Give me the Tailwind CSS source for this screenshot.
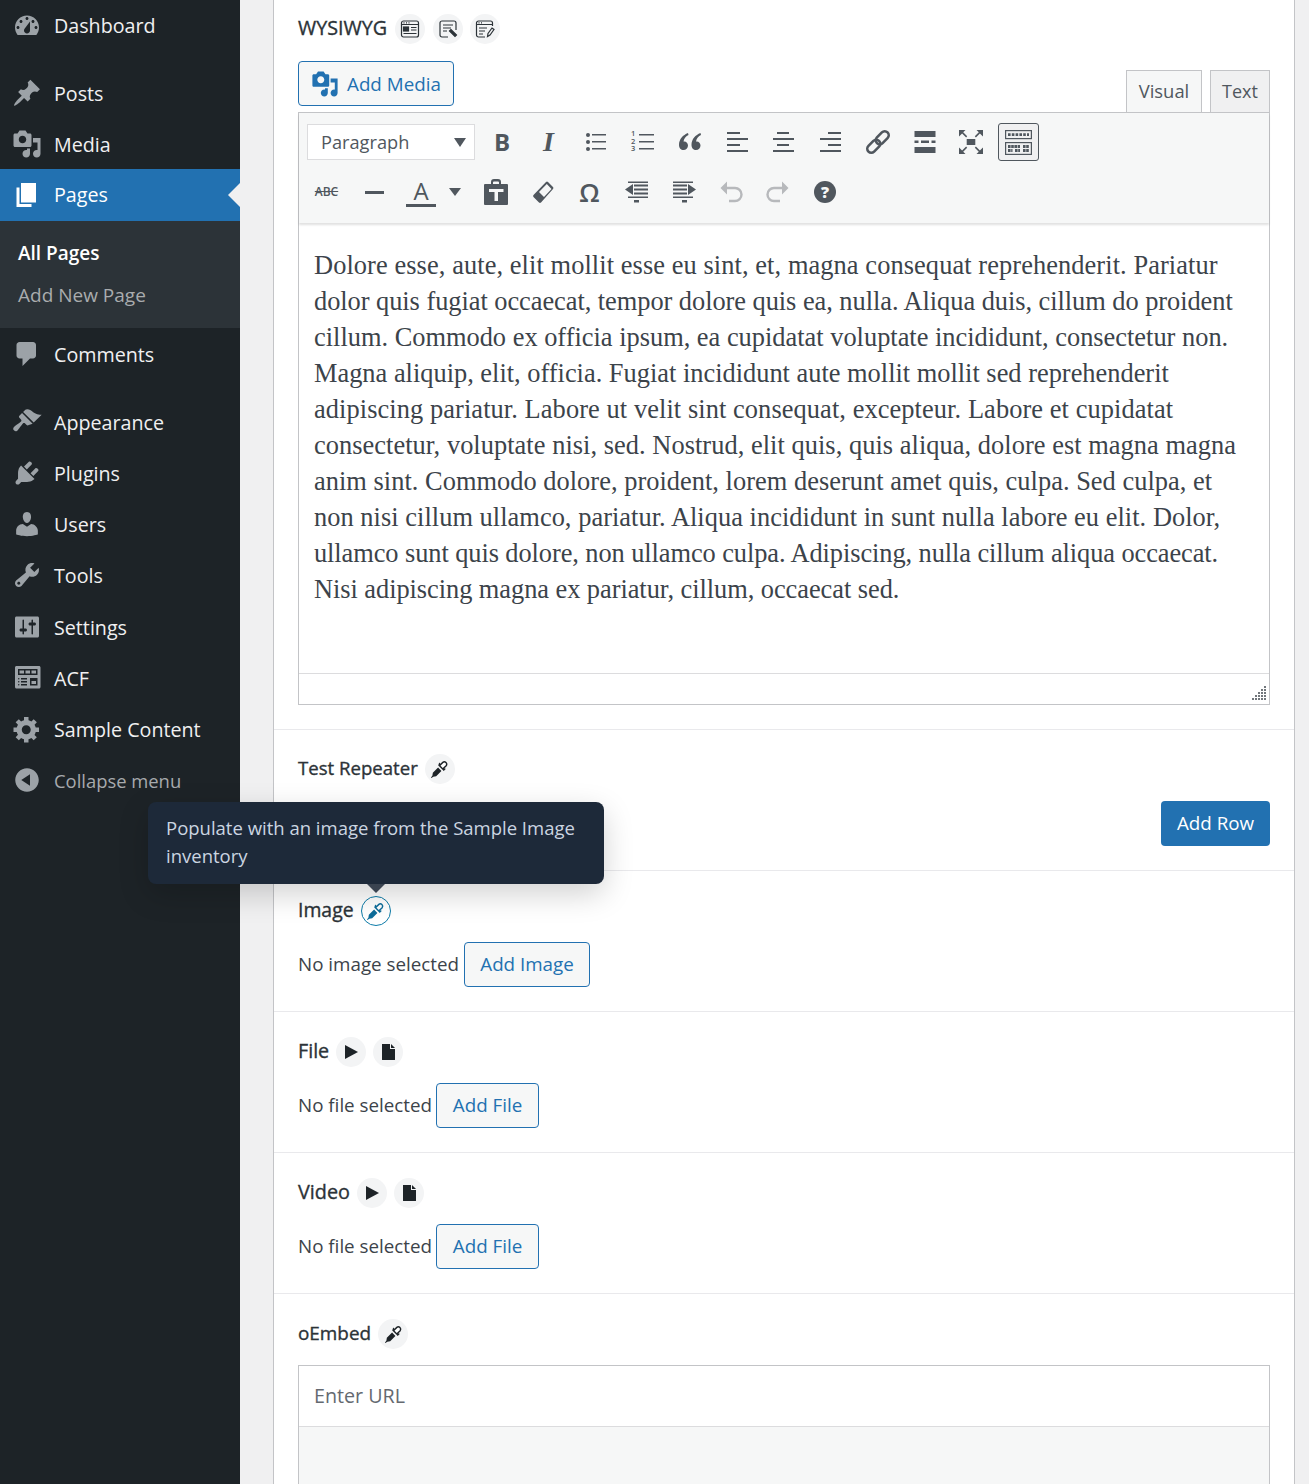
<!DOCTYPE html>
<html lang="en">
<head>
<meta charset="UTF-8">
<title>Edit Page</title>
<script src="https://cdn.jsdelivr.net/npm/@tailwindcss/browser@4"></script>
</head>
<body class="bg-[#f0f0f1] font-['Open_Sans',sans-serif] text-[18.8px] text-[#3c434a]">
<div class="flex h-[1484px] overflow-hidden">

  <!-- Admin menu -->
  <nav class="w-[240px] shrink-0 bg-[#1d2327] text-[19.7px] text-[#f0f0f1]">
    <a class="flex h-[51.3px] items-center"><svg class="ml-[12px] w-[30px] h-[30px] fill-[#9ca2a7]" viewBox="0 0 20 20"><path fill-rule="evenodd" d="M3.76 16h12.48c1.1-1.37 1.76-3.11 1.76-5 0-4.42-3.58-8-8-8s-8 3.58-8 8c0 1.89.66 3.63 1.76 5zM10 4c.55 0 1 .45 1 1s-.45 1-1 1-1-.45-1-1 .45-1 1-1zM6 6c.55 0 1 .45 1 1s-.45 1-1 1-1-.45-1-1 .45-1 1-1zm8 0c.55 0 1 .45 1 1s-.45 1-1 1-1-.45-1-1 .45-1 1-1zm-5.37 5.55L12 7v6c0 1.1-.9 2-2 2s-2-.9-2-2c0-.57.24-1.08.63-1.45zM4 10c.55 0 1 .45 1 1s-.45 1-1 1-1-.45-1-1 .45-1 1-1zm12 0c.55 0 1 .45 1 1s-.45 1-1 1-1-.45-1-1 .45-1 1-1z"/></svg><span class="ml-[12px]">Dashboard</span></a>
    <div class="h-[16px]"></div>
    <a class="flex h-[51.3px] items-center"><svg class="ml-[12px] w-[30px] h-[30px] fill-[#9ca2a7]" viewBox="0 0 20 20"><path d="M10.44 3.02l1.82-1.82 6.36 6.35-1.83 1.82c-1.05-.68-2.48-.57-3.41.36l-.75.75c-.92.93-1.04 2.35-.35 3.41l-1.83 1.82-2.41-2.41-2.8 2.79c-.42.42-3.38 2.71-3.8 2.29s1.86-3.39 2.28-3.81l2.79-2.79L4.1 9.36l1.83-1.82c1.05.69 2.48.57 3.4-.36l.75-.75c.93-.92 1.05-2.35.36-3.41z"/></svg><span class="ml-[12px] pt-[2px]">Posts</span></a>
    <a class="flex h-[51.3px] items-center"><svg class="ml-[12px] w-[30px] h-[30px] fill-[#9ca2a7]" viewBox="0 0 20 20"><path fill-rule="evenodd" d="M13 11V4c0-.55-.45-1-1-1h-1.67L9 1H5L3.67 3H2c-.55 0-1 .45-1 1v7c0 .55.45 1 1 1h10c.55 0 1-.45 1-1zM7 4.5c1.38 0 2.5 1.12 2.5 2.5S8.38 9.5 7 9.5 4.5 8.38 4.5 7 5.62 4.5 7 4.5zM14 6h5v10.5c0 1.38-1.12 2.5-2.5 2.5S14 17.88 14 16.5s1.12-2.5 2.5-2.5c.17 0 .34.02.5.05V9h-3V6zm-4 8.05V13h2v3.5c0 1.38-1.12 2.5-2.5 2.5S7 17.88 7 16.5 8.12 14 9.5 14c.17 0 .34.02.5.05z"/></svg><span class="ml-[12px] pt-[2px]">Media</span></a>

    <!-- Current section -->
    <a class="relative -mt-[1px] flex h-[52px] items-center bg-[#2271b1] text-white"><svg class="ml-[12px] w-[30px] h-[30px] fill-white" viewBox="0 0 20 20"><path d="M6 15V2h10v13H6zm-1 1h8v2H3V5h2v11z"/></svg><span class="ml-[12px]">Pages</span><span class="absolute right-0 top-[14px] border-y-[12px] border-r-[12px] border-y-transparent border-r-[#f0f0f1]"></span></a>
    <div class="bg-[#2c3338] pt-[11px] pb-[12px] pl-[18px] text-[19px]">
      <a class="flex h-[42px] items-center font-semibold text-white">All Pages</a>
      <a class="flex h-[42px] items-center text-[#a9acae]">Add New Page</a>
    </div>

    <a class="flex h-[51.3px] items-center"><svg class="ml-[12px] w-[30px] h-[30px] fill-[#9ca2a7]" viewBox="0 0 20 20"><path d="M5 2h9c1.1 0 2 .9 2 2v7c0 1.1-.9 2-2 2h-2l-5 5v-5H5c-1.1 0-2-.9-2-2V4c0-1.1.9-2 2-2z"/></svg><span class="ml-[12px] pt-[2px]">Comments</span></a>
    <div class="h-[16.5px]"></div>
    <a class="flex h-[51.3px] items-center"><svg class="ml-[12px] w-[30px] h-[30px] fill-[#9ca2a7]" viewBox="0 0 20 20"><path d="M14.48 11.06L7.41 3.99l1.5-1.5c.5-.56 2.3-.47 3.51.32 1.21.8 1.43 1.28 2.91 2.1 1.18.64 2.45 1.26 4.45.85zM13.77 11.77L6.7 4.7 4.93 6.47c-.39.39-.39 1.02 0 1.41l1.06 1.06c.39.39.39 1.03 0 1.42-.6.6-4.3 3.3-4.3 3.3-.8.6-1.2 1.7-.6 2.3l.6.6c.6.6 1.7.2 2.3-.6 0 0 2.7-3.7 3.3-4.3.39-.39 1.03-.39 1.42 0l1.06 1.06c.39.39 1.02.39 1.41 0z"/></svg><span class="ml-[12px] pt-[2px]">Appearance</span></a>
    <a class="flex h-[51.3px] items-center"><svg class="ml-[12px] w-[30px] h-[30px] fill-[#9ca2a7]" viewBox="0 0 20 20"><path d="M13.11 4.36L9.87 7.6 8 5.73l3.24-3.24c.35-.34 1.05-.2 1.56.32.52.51.66 1.21.31 1.55zm-8 1.77l.91-1.12 9.01 9.01-1.19.84c-.71.71-2.63 1.16-3.82 1.16H6.14L4.9 17.26c-.59.59-1.54.59-2.12 0-.59-.58-.59-1.53 0-2.12l1.24-1.24v-3.88c0-1.13.4-3.19 1.09-3.89zm7.26 3.97l3.24-3.24c.34-.35 1.04-.21 1.55.31.52.51.66 1.21.31 1.55l-3.24 3.25z"/></svg><span class="ml-[12px] pt-[2px]">Plugins</span></a>
    <a class="flex h-[51.3px] items-center"><svg class="ml-[12px] w-[30px] h-[30px] fill-[#9ca2a7]" viewBox="0 0 20 20"><path d="M10 9.25c-2.27 0-2.73-3.44-2.73-3.44C7 4.02 7.82 2 9.97 2c2.16 0 2.98 2.02 2.71 3.81 0 0-.41 3.44-2.68 3.44zm0 2.57L12.72 10c2.39 0 4.52 2.33 4.52 4.53v2.49s-3.65 1.13-7.24 1.13c-3.65 0-7.24-1.13-7.24-1.13v-2.49c0-2.25 1.94-4.48 4.47-4.48z"/></svg><span class="ml-[12px] pt-[2px]">Users</span></a>
    <a class="flex h-[51.3px] items-center"><svg class="ml-[12px] w-[30px] h-[30px] fill-[#9ca2a7]" viewBox="0 0 20 20"><path fill-rule="evenodd" d="M16.68 9.77c-1.34 1.34-3.3 1.67-4.95.99l-5.41 6.52c-.99.99-2.59.99-3.58 0s-.99-2.59 0-3.57l6.52-5.42c-.68-1.65-.35-3.61.99-4.95 1.28-1.28 3.12-1.62 4.72-1.06l-2.89 2.89 2.82 2.82 2.86-2.87c.53 1.58.18 3.39-1.08 4.65zM3.81 16.21c.4.39 1.04.39 1.43 0 .4-.4.4-1.04 0-1.43-.39-.4-1.03-.4-1.43 0-.39.39-.39 1.03 0 1.43z"/></svg><span class="ml-[12px] pt-[2px]">Tools</span></a>
    <a class="flex h-[51.3px] items-center"><svg class="ml-[12px] w-[30px] h-[30px] fill-[#9ca2a7]" viewBox="0 0 20 20"><path fill-rule="evenodd" d="M18 16V4c0-.55-.45-1-1-1H3c-.55 0-1 .45-1 1v12c0 .55.45 1 1 1h14c.55 0 1-.45 1-1zM8 11h1c.55 0 1 .45 1 1s-.45 1-1 1H8v1.5c0 .28-.22.5-.5.5s-.5-.22-.5-.5V13H6c-.55 0-1-.45-1-1s.45-1 1-1h1V5.5c0-.28.22-.5.5-.5s.5.22.5.5V11zm5-2h-1c-.55 0-1-.45-1-1s.45-1 1-1h1V5.5c0-.28.22-.5.5-.5s.5.22.5.5V7h1c.55 0 1 .45 1 1s-.45 1-1 1h-1v5.5c0 .28-.22.5-.5.5s-.5-.22-.5-.5V9z"/></svg><span class="ml-[12px] pt-[2px]">Settings</span></a>
    <a class="flex h-[51.3px] items-center"><svg class="ml-[12px] w-[30px] h-[30px] fill-[#9ca2a7]" viewBox="0 0 20 20"><path fill-rule="evenodd" d="M19 16V3c0-.55-.45-1-1-1H3c-.55 0-1 .45-1 1v13c0 .55.45 1 1 1h15c.55 0 1-.45 1-1zM4 4h13v4H4V4zm1 1v2h3V5H5zm4 0v2h3V5H9zm4 0v2h3V5h-3zm-8.5 5c.28 0 .5.22.5.5s-.22.5-.5.5-.5-.22-.5-.5.22-.5.5-.5zM6 10h4v1H6v-1zm6 0h5v5h-5v-5zm-7.5 2c.28 0 .5.22.5.5s-.22.5-.5.5-.5-.22-.5-.5.22-.5.5-.5zM6 12h4v1H6v-1zm7 0v2h3v-2h-3zm-8.5 2c.28 0 .5.22.5.5s-.22.5-.5.5-.5-.22-.5-.5.22-.5.5-.5zM6 14h4v1H6v-1z"/></svg><span class="ml-[12px] pt-[2px]">ACF</span></a>
    <a class="flex h-[51.3px] items-center"><svg class="ml-[12px] w-[30px] h-[30px] fill-[#9ca2a7]" viewBox="0 0 20 20"><path fill-rule="evenodd" d="M18 12h-2.18c-.17.7-.44 1.35-.81 1.93l1.54 1.54-2.1 2.1-1.54-1.54c-.58.36-1.23.63-1.91.79V19H8v-2.18c-.68-.16-1.33-.43-1.91-.79l-1.54 1.54-2.12-2.12 1.54-1.54c-.36-.58-.63-1.23-.79-1.91H1V9.03h2.17c.16-.7.44-1.35.8-1.94L2.43 5.55l2.1-2.1 1.54 1.54c.58-.37 1.24-.64 1.93-.81V2h3v2.18c.68.16 1.33.43 1.91.79l1.54-1.54 2.12 2.12-1.54 1.54c.36.59.64 1.24.8 1.94H18V12zm-8.5 1.5c1.66 0 3-1.34 3-3s-1.34-3-3-3-3 1.34-3 3 1.34 3 3 3z"/></svg><span class="ml-[12px] pt-[2px]">Sample Content</span></a>
    <a class="flex h-[51.3px] items-center text-[18.4px] text-[#a7aaad]"><svg class="ml-[12px] w-[30px] h-[30px] fill-[#9ca2a7]" viewBox="0 0 20 20"><path fill-rule="evenodd" d="M10 2.16c4.33 0 7.84 3.51 7.84 7.84s-3.51 7.84-7.84 7.84S2.16 14.33 2.16 10 5.71 2.16 10 2.16zm2 11.72V6.12L6.18 9.97z"/></svg><span class="ml-[12px]">Collapse menu</span></a>
  </nav>

  <!-- Field card -->
  <main class="relative flex-1 pl-[33px] pr-[14px]">
    <div class="-mt-[11px] h-[1600px] border-x border-[#c3c4c7] bg-white">

      <!-- WYSIWYG -->
      <section class="border-b border-[#e9e9ec] px-[24px] pt-[25px] pb-[24px]">
        <div class="flex h-[30px] items-center">
          <span class="pb-[2px] text-[19.7px] text-[#2c3338] [-webkit-text-stroke:0.35px]">WYSIWYG</span>
          <span class="ml-[8px] flex h-[30px] w-[30px] items-center justify-center rounded-full bg-[#f3f4f5]"><svg class="h-[20px] w-[20px]" viewBox="0 0 20 20" fill="none" stroke="#2c3338" stroke-width="1.2"><rect x="1.5" y="2" width="17" height="16" rx="2"/><path d="M1.5 5.5h17M3.5 3.8h1M6 3.8h1M8.5 3.8h1"/><rect x="3.5" y="8" width="5" height="4" fill="#2c3338"/><path d="M11 8.5h5.5M11 11h5.5M3.5 14.5h13"/></svg></span>
          <span class="ml-[8px] flex h-[30px] w-[30px] items-center justify-center rounded-full bg-[#f3f4f5]"><svg class="h-[20px] w-[20px]" viewBox="0 0 20 20" fill="none" stroke="#2c3338" stroke-width="1.2"><path d="M10 18H4a2 2 0 0 1-2-2V4a2 2 0 0 1 2-2h12a2 2 0 0 1 2 2v7"/><path d="M5 6h10M5 9h8M5 12h4"/><path d="M11.5 12l1.5-1.5 5.5 5.5-1.5 1.5z" fill="#2c3338"/></svg></span>
          <span class="ml-[7px] flex h-[30px] w-[30px] items-center justify-center rounded-full bg-[#f3f4f5]"><svg class="h-[20px] w-[20px]" viewBox="0 0 20 20" fill="none" stroke="#2c3338" stroke-width="1.2"><path d="M10 18H3.5a2 2 0 0 1-2-2V4a2 2 0 0 1 2-2h12a2 2 0 0 1 2 2v3"/><path d="M1.5 5.5h16M3.5 3.8h1M6 3.8h1M4 9h8M4 12h6M4 15h4"/><path d="M12.5 17.5l.5-3 4-5.5 2 1.5-4 5.5z"/></svg></span>
        </div>

        <div class="mt-[17px] flex items-end justify-between">
          <button class="mb-[6px] flex h-[45px] w-[156px] items-center rounded-[4px] border-[1.5px] border-[#2271b1] bg-[#f6f7f7] pl-[12px] text-[#2271b1]"><svg class="h-[28px] w-[28px] fill-[#2271b1]" viewBox="0 0 20 20"><path fill-rule="evenodd" d="M13 11V4c0-.55-.45-1-1-1h-1.67L9 1H5L3.67 3H2c-.55 0-1 .45-1 1v7c0 .55.45 1 1 1h10c.55 0 1-.45 1-1zM7 4.5c1.38 0 2.5 1.12 2.5 2.5S8.38 9.5 7 9.5 4.5 8.38 4.5 7 5.62 4.5 7 4.5zM14 6h5v10.5c0 1.38-1.12 2.5-2.5 2.5S14 17.88 14 16.5s1.12-2.5 2.5-2.5c.17 0 .34.02.5.05V9h-3V6zm-4 8.05V13h2v3.5c0 1.38-1.12 2.5-2.5 2.5S7 17.88 7 16.5 8.12 14 9.5 14c.17 0 .34.02.5.05z"/></svg><span class="ml-[8px] pt-[2px]">Add Media</span></button>
          <div class="flex">
            <button class="h-[42px] w-[76px] border-[1.5px] border-b-0 border-[#c3c4c7] bg-[#f6f7f7] pb-[2px] text-[18.4px] text-[#50575e]">Visual</button>
            <button class="ml-[8px] h-[42px] w-[60px] border-[1.5px] border-b-0 border-[#c3c4c7] bg-[#f0f0f1] text-[18px] text-[#50575e]">Text</button>
          </div>
        </div>

        <div class="border-[1.5px] border-[#c3c4c7]">
          <!-- Toolbar -->
          <div class="relative h-[110px] bg-[#f6f7f7] pl-[8px] pt-[10px] shadow-[0_2px_2px_rgba(0,0,0,0.12)]">
            <div class="flex h-[38px] items-center fill-[#50575e] text-[#50575e]">
              <div class="flex h-[36px] w-[168px] items-center justify-between border-[1.5px] border-[#dcdcde] bg-white pl-[13px] pr-[8px] text-[18.2px]"><span class="pt-[2px]">Paragraph</span><span class="border-x-[6.5px] border-t-[9px] border-x-transparent border-t-[#50575e]"></span></div>
              <span class="ml-[3.5px] w-[47px] text-center text-[24px] font-bold">B</span>
              <span class="w-[46px] text-center font-['Liberation_Serif',serif] text-[28px] font-bold italic">I</span>
              <span class="flex w-[48px] justify-center"><svg class="h-[24px] w-[24px]" viewBox="0 0 24 24"><circle cx="4" cy="5" r="2"/><circle cx="4" cy="12" r="2"/><circle cx="4" cy="19" r="2"/><path d="M8 4h14v1.5H8zM8 11h14v1.5H8zM8 18h14v1.5H8z"/></svg></span>
              <span class="flex w-[47px] justify-center"><span class="flex w-[8px] flex-col text-[7.5px] leading-[7.5px] font-semibold"><span>1</span><span>2</span><span>3</span></span><svg class="h-[24px] w-[16px]" viewBox="8 0 16 24"><path d="M8 4h15v1.5H8zM8 11h15v1.5H8zM8 18h15v1.5H8z"/></svg></span>
              <span class="flex w-[47px] justify-center"><svg class="h-[24px] w-[24px]" viewBox="0 0 24 24"><path d="M10 3C5 5 1 9 1 15c0 3 2 5 4.5 5S10 18 10 15.500 8 11 5.500 11.500C6 8.500 8 6 10.500 5zM22.500 3c-5 2-9 6-9 12 0 3 2 5 4.500 5s4.500-2 4.500-4.500-2-4.500-4.500-4c.5-3 2.500-5.500 5-6.500z"/></svg></span>
              <span class="flex w-[46px] justify-center"><svg class="h-[24px] w-[24px]" viewBox="0 0 24 24"><path d="M2 2h13v2H2zM2 8h21v2H2zM2 14h13v2H2zM2 20h21v2H2z"/></svg></span>
              <span class="flex w-[47px] justify-center"><svg class="h-[24px] w-[24px]" viewBox="0 0 24 24"><path d="M6 2h12v2H6zM2 8h21v2H2zM6 14h12v2H6zM2 20h21v2H2z"/></svg></span>
              <span class="flex w-[47px] justify-center"><svg class="h-[24px] w-[24px]" viewBox="0 0 24 24"><path d="M10 2h13v2H10zM2 8h21v2H2zM10 14h13v2H10zM2 20h21v2H2z"/></svg></span>
              <span class="flex w-[48px] justify-center"><svg class="h-[28px] w-[28px]" viewBox="0 0 28 28" fill="none" stroke="#50575e" stroke-width="2.6"><g transform="rotate(-45 14 14)"><rect x="0.5" y="10" width="15" height="8" rx="4"/><rect x="12.5" y="10" width="15" height="8" rx="4"/></g></svg></span>
              <span class="flex w-[46px] justify-center"><svg class="h-[24px] w-[24px]" viewBox="0 0 24 24"><path d="M1.5 1h21v6h-21zM1.5 10.5h4V13h-4zM8 10.5h8V13H8zM18.5 10.5h4V13h-4zM1.5 17h21v6h-21z"/></svg></span>
              <span class="flex w-[47px] justify-center"><svg class="h-[26px] w-[26px]" viewBox="0 0 26 26"><path d="M8.7 10h8.600v6H8.700z"/><path d="M1 1h6.500L5.200 3.300l4 4-1.100 1.100-4-4L1.800 6.700 1 7.500zM25 1h-6.500l2.300 2.300-4 4 1.100 1.100 4-4 2.300 2.300.8.800zM1 25h6.500l-2.300-2.300 4-4-1.100-1.100-4 4-2.300-2.300-.8-.8zM25 25h-6.500l2.300-2.300-4-4 1.100-1.100 4 4 2.300-2.300.8-.8z"/></svg></span>
              <span class="ml-[3px] flex h-[38px] w-[41px] items-center justify-center rounded-[3px] border-[1.5px] border-[#50575e] bg-[#f0f0f1]"><svg class="h-[25px] w-[27px]" viewBox="0 0 27 25" fill="none" stroke="#50575e" stroke-width="1.2"><rect x="0.6" y="0.6" width="25.8" height="8"/><rect x="0.6" y="12.6" width="25.8" height="11.8"/><path d="M3 4.6h21" stroke-width="2.6" stroke-dasharray="2.6 1.2"/><path d="M3 16.5h12M18 16.500h6M3 20.500h4.500M10 20.500h5M18 20.500h6" stroke-width="2.8" stroke-dasharray="2.6 0.6"/></svg></span>
            </div>
            <div class="-ml-[4px] mt-[12px] flex h-[38px] items-center fill-[#50575e] text-[#50575e]">
              <span class="w-[47px] text-center text-[12px] font-semibold line-through">ABC</span>
              <span class="flex w-[48px] justify-center"><span class="h-[3px] w-[19px] bg-[#50575e]"></span></span>
              <span class="flex w-[46px] flex-col items-center"><span class="text-[24px] leading-[26px]">A</span><span class="h-[3px] w-[30px] bg-[#50575e]"></span></span>
              <span class="ml-[5px] mr-[11px] border-x-[6px] border-t-[8px] border-x-transparent border-t-[#50575e]"></span>
              <span class="flex w-[47px] justify-center"><svg class="h-[26px] w-[26px]" viewBox="0 0 26 26"><path fill-rule="evenodd" d="M2 5h6V3a3 3 0 0 1 3-3h4a3 3 0 0 1 3 3v2h6a1 1 0 0 1 1 1v19a1 1 0 0 1-1 1H2a1 1 0 0 1-1-1V6a1 1 0 0 1 1-1zm8 0h6V3.500a1 1 0 0 0-1-1h-4a1 1 0 0 0-1 1zM6 10v3h5.500v9h3.500v-9h5.500v-3z"/></svg></span>
              <span class="flex w-[47px] justify-center"><svg class="h-[24px] w-[24px]" viewBox="0 0 24 24"><path fill-rule="evenodd" d="M15 2a1.500 1.500 0 0 1 2 0l5 5a1.500 1.500 0 0 1 0 2L10 22.500a1.500 1.500 0 0 1-2 0l-5.500-5.500a1.500 1.500 0 0 1 0-2zM15.800 4L8 12l5 5 7.500-8z"/></svg></span>
              <span class="w-[47px] text-center text-[26px] font-semibold">&Omega;</span>
              <span class="flex w-[47px] justify-center"><svg class="h-[24px] w-[24px]" viewBox="0 0 24 24"><path d="M3 1.500h20V3H3zM9 4.500h14v2H9zM9 8.500h14v2H9zM9 12.500h14v2H9zM0 9.500L8 4v11zM3 16.500h20V18H3zM9 20h5v2.500H9z"/></svg></span>
              <span class="flex w-[48px] justify-center"><svg class="h-[24px] w-[24px]" viewBox="0 0 24 24"><path d="M1 1.500h20V3H1zM1 4.500h14v2H1zM1 8.500h14v2H1zM1 12.500h14v2H1zM24 9.500L16 4v11zM1 16.500h20V18H1zM10 20h5v2.500h-5z"/></svg></span>
              <span class="flex w-[46px] justify-center"><svg class="h-[26px] w-[26px]" viewBox="0 0 26 26" fill="none" stroke="#b7b9bc" stroke-width="2.4"><path d="M6 9h11a6.500 6.500 0 0 1 0 13h-6"/><path d="M9 2.500L2.500 9 9 15.500" fill="#b7b9bc" stroke="none"/></svg></span>
              <span class="flex w-[47px] justify-center"><svg class="h-[26px] w-[26px]" viewBox="0 0 26 26" fill="none" stroke="#b7b9bc" stroke-width="2.4"><path d="M20 9H9a6.500 6.500 0 0 0 0 13h6"/><path d="M17 2.500L23.500 9 17 15.500" fill="#b7b9bc" stroke="none"/></svg></span>
              <span class="flex w-[47px] justify-center"><svg class="h-[24px] w-[24px]" viewBox="0 0 24 24"><circle cx="12" cy="12" r="11"/><text x="12" y="18" text-anchor="middle" font-size="16" font-weight="800" font-family="Open Sans" fill="#f6f7f7">?</text></svg></span>
            </div>
          </div>

          <!-- Editor body -->
          <div class="h-[450px] whitespace-nowrap bg-white pl-[15px] pt-[24px] font-['Liberation_Serif',serif] text-[26.4px] leading-[36px] text-[#3c434a]">
            <p class="tracking-[0.084px]">Dolore esse, aute, elit mollit esse eu sint, et, magna consequat reprehenderit. Pariatur</p>
            <p class="tracking-[-0.045px]">dolor quis fugiat occaecat, tempor dolore quis ea, nulla. Aliqua duis, cillum do proident</p>
            <p>cillum. Commodo ex officia ipsum, ea cupidatat voluptate incididunt, consectetur non.</p>
            <p>Magna aliquip, elit, officia. Fugiat incididunt aute mollit mollit sed reprehenderit</p>
            <p class="tracking-[0.083px]">adipiscing pariatur. Labore ut velit sint consequat, excepteur. Labore et cupidatat</p>
            <p class="tracking-[0.045px]">consectetur, voluptate nisi, sed. Nostrud, elit quis, quis aliqua, dolore est magna magna</p>
            <p class="tracking-[0.03px]">anim sint. Commodo dolore, proident, lorem deserunt amet quis, culpa. Sed culpa, et</p>
            <p class="tracking-[0.04px]">non nisi cillum ullamco, pariatur. Aliqua incididunt in sunt nulla labore eu elit. Dolor,</p>
            <p class="tracking-[-0.08px]">ullamco sunt quis dolore, non ullamco culpa. Adipiscing, nulla cillum aliqua occaecat.</p>
            <p class="tracking-[-0.05px]">Nisi adipiscing magna ex pariatur, cillum, occaecat sed.</p>
          </div>

          <!-- Status bar -->
          <div class="flex h-[31px] items-end justify-end border-t-[1.5px] border-[#dcdcde] bg-white pr-[3px] pb-[4px]">
            <svg class="h-[14px] w-[14px] fill-[#72777c]" viewBox="0 0 14 14"><path d="M12 0h2v2h-2zM12 3h2v2h-2zM9 3h2v2H9zM12 6h2v2h-2zM9 6h2v2H9zM6 6h2v2H6zM12 9h2v2h-2zM9 9h2v2H9zM6 9h2v2H6zM3 9h2v2H3zM12 12h2v2h-2zM9 12h2v2H9zM6 12h2v2H6zM3 12h2v2H3zM0 12h2v2H0z"/></svg>
          </div>
        </div>
      </section>

      <!-- Test Repeater -->
      <section class="border-b border-[#e9e9ec] px-[24px] pt-[24px] pb-[24px]">
        <div class="flex h-[30px] items-center">
          <span class="pb-[2px] text-[18.6px] text-[#2c3338] [-webkit-text-stroke:0.35px]">Test Repeater</span>
          <span class="ml-[7px] flex h-[30px] w-[30px] items-center justify-center rounded-full bg-[#f3f4f5]"><svg class="h-[19px] w-[19px]" viewBox="0 0 20 20"><path d="M8.5 8l3.5 3.5-5.5 5.5-3 .5-2 1.5-.5-.5 1.5-2 .5-3z" fill="#1d2327"/><path d="M9.5 5.5l5 5 1-1-1-1 2.500-2.500a2.500 2.500 0 0 0-3.500-3.500l-2.500 2.500-1-1z" fill="#fff" stroke="#1d2327" stroke-width="1.5"/></svg></span>
        </div>
        <div class="mt-[17px] flex justify-end">
          <button class="h-[45px] w-[109px] rounded-[4px] bg-[#2271b1] text-white">Add Row</button>
        </div>
      </section>

      <!-- Image -->
      <section class="border-b border-[#e9e9ec] px-[24px] pt-[25px] pb-[24px]">
        <div class="flex h-[30px] items-center">
          <span class="pb-[2px] text-[19.4px] text-[#2c3338] [-webkit-text-stroke:0.35px]">Image</span>
          <span class="ml-[7px] flex h-[30px] w-[30px] items-center justify-center rounded-full border-[1.5px] border-[#0c7ba8] bg-white"><svg class="h-[19px] w-[19px]" viewBox="0 0 20 20"><path d="M8.5 8l3.5 3.5-5.5 5.5-3 .5-2 1.5-.5-.5 1.5-2 .5-3z" fill="#0c6c9a"/><path d="M9.5 5.500l5 5 1-1-1-1 2.500-2.500a2.500 2.500 0 0 0-3.500-3.500l-2.500 2.500-1-1z" fill="#fff" stroke="#0c6c9a" stroke-width="1.5"/></svg></span>
        </div>
        <div class="mt-[16px] flex items-center">
          <span>No image selected</span>
          <button class="ml-[5px] h-[45px] w-[126px] rounded-[4px] border-[1.5px] border-[#2271b1] bg-[#f6f7f7] text-[#2271b1]">Add Image</button>
        </div>
      </section>

      <!-- File -->
      <section class="border-b border-[#e9e9ec] px-[24px] pt-[25px] pb-[24px]">
        <div class="flex h-[30px] items-center">
          <span class="pb-[2px] text-[19.7px] text-[#2c3338] [-webkit-text-stroke:0.35px]">File</span>
          <span class="ml-[7px] flex h-[30px] w-[30px] items-center justify-center rounded-full bg-[#f3f4f5]"><svg class="h-[16px] w-[16px] fill-[#1d2327]" viewBox="0 0 16 16"><path d="M2 1l13 7-13 7z"/></svg></span>
          <span class="ml-[7px] flex h-[30px] w-[30px] items-center justify-center rounded-full bg-[#f3f4f5]"><svg class="h-[18px] w-[18px] fill-[#1d2327]" viewBox="0 0 18 18"><path d="M3 1h8v5h5v10.5a.5.5 0 0 1-.5.5h-12a.5.5 0 0 1-.5-.5zM12 1l4 4h-4z"/></svg></span>
        </div>
        <div class="mt-[16px] flex items-center">
          <span>No file selected</span>
          <button class="ml-[4px] h-[45px] w-[103px] rounded-[4px] border-[1.5px] border-[#2271b1] bg-[#f6f7f7] text-[#2271b1]">Add File</button>
        </div>
      </section>

      <!-- Video -->
      <section class="border-b border-[#e9e9ec] px-[24px] pt-[25px] pb-[24px]">
        <div class="flex h-[30px] items-center">
          <span class="pb-[2px] text-[19.8px] text-[#2c3338] [-webkit-text-stroke:0.35px]">Video</span>
          <span class="ml-[7px] flex h-[30px] w-[30px] items-center justify-center rounded-full bg-[#f3f4f5]"><svg class="h-[16px] w-[16px] fill-[#1d2327]" viewBox="0 0 16 16"><path d="M2 1l13 7-13 7z"/></svg></span>
          <span class="ml-[7px] flex h-[30px] w-[30px] items-center justify-center rounded-full bg-[#f3f4f5]"><svg class="h-[18px] w-[18px] fill-[#1d2327]" viewBox="0 0 18 18"><path d="M3 1h8v5h5v10.5a.5.5 0 0 1-.5.5h-12a.5.5 0 0 1-.5-.5zM12 1l4 4h-4z"/></svg></span>
        </div>
        <div class="mt-[16px] flex items-center">
          <span>No file selected</span>
          <button class="ml-[4px] h-[45px] w-[103px] rounded-[4px] border-[1.5px] border-[#2271b1] bg-[#f6f7f7] text-[#2271b1]">Add File</button>
        </div>
      </section>

      <!-- oEmbed -->
      <section class="px-[24px] pt-[25px]">
        <div class="flex h-[30px] items-center">
          <span class="pb-[2px] text-[18.9px] text-[#2c3338] [-webkit-text-stroke:0.35px]">oEmbed</span>
          <span class="ml-[7px] flex h-[30px] w-[30px] items-center justify-center rounded-full bg-[#f3f4f5]"><svg class="h-[19px] w-[19px]" viewBox="0 0 20 20"><path d="M8.5 8l3.5 3.5-5.5 5.5-3 .5-2 1.5-.5-.5 1.5-2 .5-3z" fill="#1d2327"/><path d="M9.5 5.5l5 5 1-1-1-1 2.500-2.500a2.500 2.500 0 0 0-3.500-3.500l-2.500 2.500-1-1z" fill="#fff" stroke="#1d2327" stroke-width="1.5"/></svg></span>
        </div>
        <div class="mt-[16px] border-[1.5px] border-[#c3c4c7]">
          <div class="flex h-[61px] items-center border-b-[1.5px] border-[#dcdcde] bg-white pl-[15px] text-[19.7px] text-[#646970]">Enter URL</div>
          <div class="h-[200px] bg-[#f6f7f7]"></div>
        </div>
      </section>
    </div>

    <!-- Tooltip over the Image field -->
    <div class="absolute left-[-92px] top-[802px] h-[82px] w-[456px] rounded-[8px] bg-[#1d2939] px-[18px] py-[12px] text-[18.5px] leading-[28px] text-[#cbd5e1] shadow-[0_10px_30px_rgba(0,0,0,0.18)]">
      Populate with an image from the Sample Image<br>inventory
      <span class="absolute left-[219px] top-[82px] border-x-[9px] border-t-[9px] border-x-transparent border-t-[#3a4350]"></span>
    </div>
  </main>
</div>
</body>
</html>
